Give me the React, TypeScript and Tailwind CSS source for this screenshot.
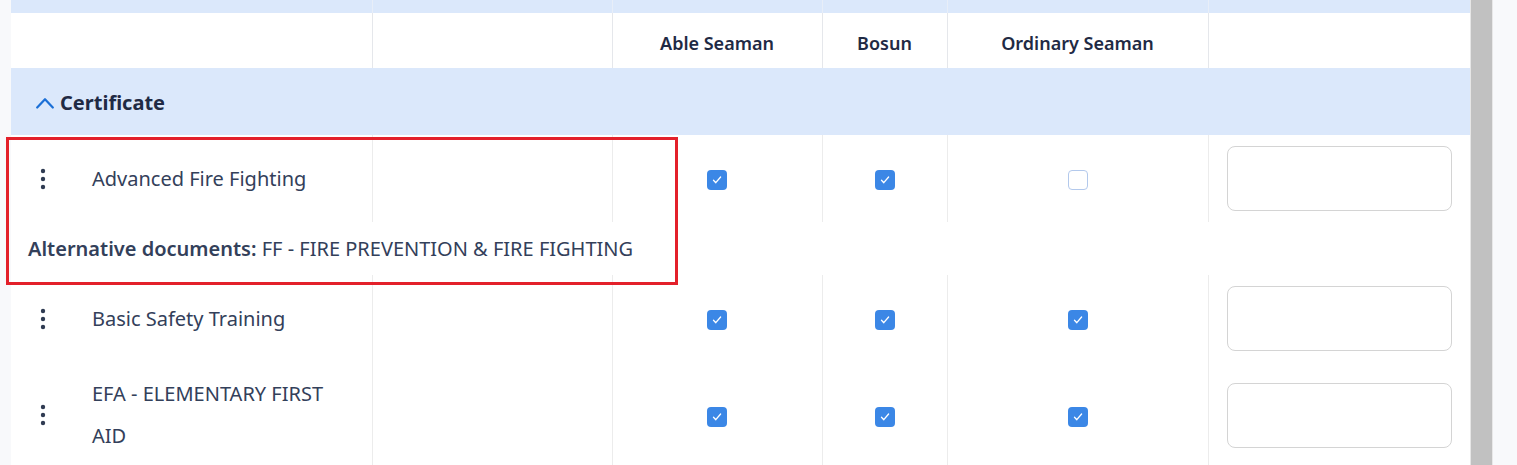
import React from "react";

type Row = {
  name: string[];
  able: boolean;
  bosun: boolean;
  ordinary: boolean;
  alt?: string;
};

const ROWS: Row[] = [
  { name: ["Advanced Fire Fighting"], able: true, bosun: true, ordinary: false, alt: "FF - FIRE PREVENTION & FIRE FIGHTING" },
  { name: ["Basic Safety Training"], able: true, bosun: true, ordinary: true },
  { name: ["EFA - ELEMENTARY FIRST", "AID"], able: true, bosun: true, ordinary: true },
];

function Check({ checked }: { checked: boolean }) {
  if (!checked) {
    return <span className="inline-block w-[20px] h-[20px] rounded-[4px] border border-[#b3c9ec] bg-white align-middle" />;
  }
  return (
    <span className="inline-flex w-[20px] h-[20px] rounded-[4px] bg-[#3b87e6] items-center justify-center align-middle">
      <svg width="12" height="12" viewBox="0 0 12 12" fill="none">
        <path d="M2.5 6.3l2.3 2.4L9.6 3" stroke="white" strokeWidth="1.3" strokeLinecap="round" strokeLinejoin="round" />
      </svg>
    </span>
  );
}

function Kebab() {
  return (
    <svg width="6" height="22" viewBox="0 0 6 22" fill="#2f3b52">
      <circle cx="3" cy="3" r="2.2" />
      <circle cx="3" cy="11" r="2.2" />
      <circle cx="3" cy="19" r="2.2" />
    </svg>
  );
}

export default function App() {
  const cellB = "border-l border-[#ececec] py-[11px]";
  return (
    <div
      className="relative h-[465px] w-[1517px] overflow-hidden bg-[#f8f9fb] flex"
      style={{ fontFamily: '"Noto Sans", "Open Sans", sans-serif' }}
    >
      <div className="w-[11px] shrink-0" />
      <div className="w-[1460px] shrink-0 bg-white border-r border-[#e6e6e6]">
        <table className="w-full border-collapse table-fixed">
          <colgroup>
            <col className="w-[361px]" />
            <col className="w-[240px]" />
            <col className="w-[210px]" />
            <col className="w-[125px]" />
            <col className="w-[261px]" />
            <col />
          </colgroup>
          <tbody>
            {/* tail of previous group row */}
            <tr className="bg-[#dbe8fb] h-[13px]">
              <td />
              <td className="border-l border-[#e8eef8]" />
              <td className="border-l border-[#e8eef8]" />
              <td className="border-l border-[#e8eef8]" />
              <td className="border-l border-[#e8eef8]" />
              <td className="border-l border-[#e8eef8]" />
            </tr>
            {/* header */}
            <tr className="h-[55px] text-[18px] font-semibold text-[#1f2a44] text-center">
              <td />
              <td className="border-l border-[#e5e7eb]" />
              <td className="border-l border-[#e5e7eb] pt-[5px]">Able Seaman</td>
              <td className="border-l border-[#e5e7eb] pt-[5px]">Bosun</td>
              <td className="border-l border-[#e5e7eb] pt-[5px]">Ordinary Seaman</td>
              <td className="border-l border-[#e5e7eb]" />
            </tr>
            {/* group */}
            <tr className="h-[67px] bg-[#dbe8fb]">
              <td colSpan={6} className="pl-[25px] pt-[2px]">
                <div className="flex items-center gap-[6px]">
                  <svg width="18" height="12" viewBox="0 0 18 12" fill="none">
                    <path d="M1.2 10.5L9 2.2l7.8 8.3" stroke="#1b6fd6" strokeWidth="2.2" strokeLinecap="round" strokeLinejoin="round" />
                  </svg>
                  <span className="text-[20px] font-bold text-[#1f2a44]">Certificate</span>
                </div>
              </td>
            </tr>
            {ROWS.map((r, i) => (
              <React.Fragment key={i}>
                <tr className="text-[20px] text-[#33405a]">
                  <td className="py-[11px] pl-[12px]">
                    <div className="flex items-center gap-[29px]">
                      <div className="w-[40px] flex justify-center shrink-0">
                        <Kebab />
                      </div>
                      <div className="leading-[42px]">
                        {r.name.map((n, j) => (
                          <div key={j}>{n}</div>
                        ))}
                      </div>
                    </div>
                  </td>
                  <td className={cellB} />
                  <td className={`${cellB} text-center`}>
                    <Check checked={r.able} />
                  </td>
                  <td className={`${cellB} text-center`}>
                    <Check checked={r.bosun} />
                  </td>
                  <td className={`${cellB} text-center`}>
                    <Check checked={r.ordinary} />
                  </td>
                  <td className={`${cellB} pl-[18px] pr-[18px]`}>
                    <input
                      type="text"
                      className="block w-full h-[65px] rounded-[8px] border border-[#d4d4d4] bg-white outline-none"
                    />
                  </td>
                </tr>
                {r.alt && (
                  <tr className="h-[53px]">
                    <td colSpan={6} className="pl-[17px] text-[20px] text-[#33405a]">
                      <span className="font-semibold">Alternative documents:</span> {r.alt}
                    </td>
                  </tr>
                )}
              </React.Fragment>
            ))}
          </tbody>
        </table>
      </div>
      <div className="w-[21px] shrink-0 bg-[#c1c1c1]" />
      <div className="w-[25px] shrink-0 bg-[#f8f9fb] border-l border-[#e8e8e8]" />

      {/* highlight annotation */}
      <div className="absolute left-[6px] top-[137px] w-[672px] h-[148px] border-[3px] border-[#e3202a] pointer-events-none" />
    </div>
  );
}
